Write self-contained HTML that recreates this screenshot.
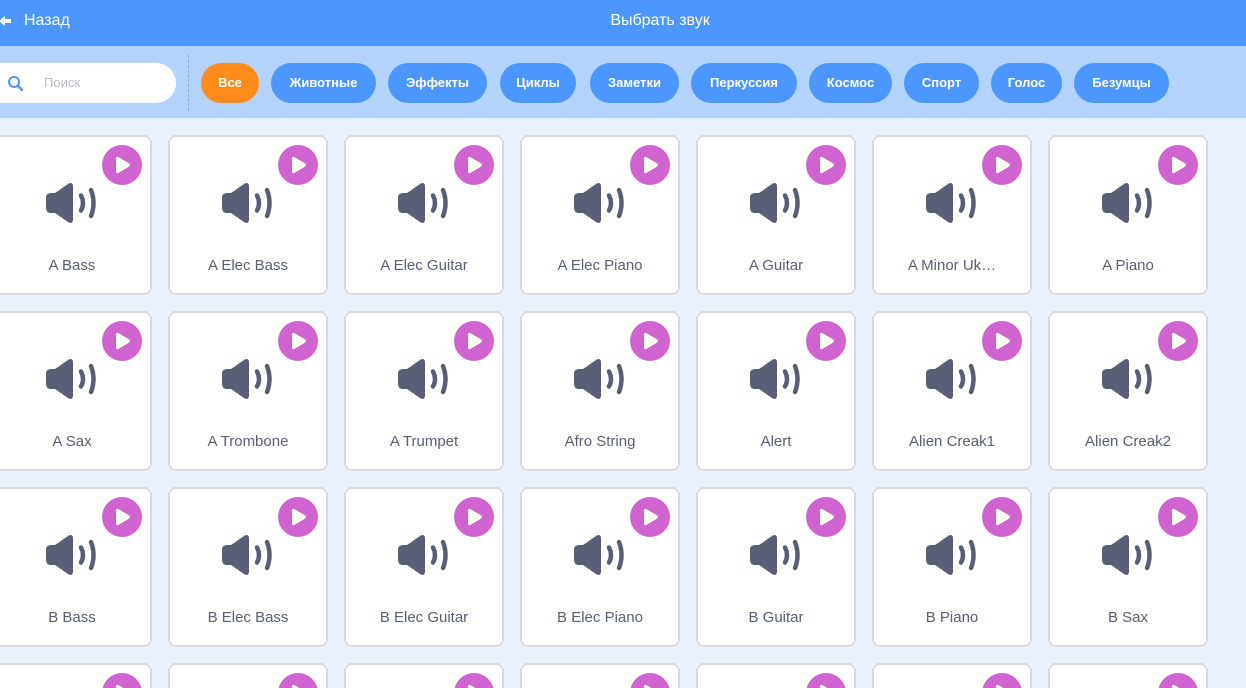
<!DOCTYPE html><html><head><meta charset="utf-8"><style>
html,body{margin:0;width:1246px;height:688px;overflow:hidden}
body{background:#e9f1fc;font-family:"Liberation Sans",sans-serif;position:relative}
.hdr{position:absolute;left:0;top:0;width:1246px;height:46px;background:#4c97ff;color:#fff}
.bar{position:absolute;left:0;top:46px;width:1246px;height:72px;background:#b3d3fd}
.pill{position:absolute;top:63px;height:40px;line-height:40px;border-radius:20px;background:#4c97ff;color:#fff;font-weight:bold;font-size:13px;text-align:center}
#g{position:absolute;left:0;top:0;width:1246px;height:688px;overflow:hidden}
.card{position:absolute;width:156px;height:156px;border:2px solid #d9d9d9;border-radius:8px;background:#fff;box-sizing:content-box}
.card .nm{position:absolute;left:0;right:0;top:120px;text-align:center;font-size:15px;color:#575e75}
.card svg.p{position:absolute;left:108px;top:8px}
.card svg.s{position:absolute;left:52px;top:45px}
</style></head><body>
<div class="hdr">
<svg style="position:absolute;left:-2px;top:13px" width="16" height="16" viewBox="0 0 16 16"><path d="M1 8 L7 3 L7 6 L13 6 L13 10 L7 10 L7 13 Z" fill="#fff"/></svg>
<div style="position:absolute;left:24px;top:12px;font-size:16px">Назад</div>
<div style="position:absolute;left:0;width:1320px;top:12px;font-size:16px;text-align:center">Выбрать звук</div>
</div>
<div class="bar">
<div style="position:absolute;left:-20px;top:17px;width:196px;height:40px;border-radius:20px;background:#fff"></div>
<svg style="position:absolute;left:7px;top:29px" width="18" height="18" viewBox="0 0 18 18"><circle cx="7" cy="7" r="5" fill="none" stroke="#4c97ff" stroke-width="2"/><path d="M11 11 L15 15" stroke="#4c97ff" stroke-width="2.4" stroke-linecap="round"/></svg>
<div style="position:absolute;left:44px;top:29px;font-size:13px;color:#b8bcc6">Поиск</div>
<div style="position:absolute;left:188px;top:9px;height:56px;border-left:1px dashed #8fa8c8"></div>
</div>
<div class="pill" style="left:201px;width:58px;background:#ff8c1a">Все</div>
<div class="pill" style="left:271px;width:105px">Животные</div>
<div class="pill" style="left:388px;width:99px">Эффекты</div>
<div class="pill" style="left:500px;width:76px">Циклы</div>
<div class="pill" style="left:590px;width:89px">Заметки</div>
<div class="pill" style="left:691px;width:106px">Перкуссия</div>
<div class="pill" style="left:809px;width:83px">Космос</div>
<div class="pill" style="left:904px;width:75px">Спорт</div>
<div class="pill" style="left:991px;width:71px">Голос</div>
<div class="pill" style="left:1074px;width:95px">Безумцы</div>
<div id="g"></div>
<script>
var n=[["A Bass","A Elec Bass","A Elec Guitar","A Elec Piano","A Guitar","A Minor Uk…","A Piano"],["A Sax","A Trombone","A Trumpet","Afro String","Alert","Alien Creak1","Alien Creak2"],["B Bass","B Elec Bass","B Elec Guitar","B Elec Piano","B Guitar","B Piano","B Sax"],["","","","","","",""]];
var h="";
for(var r=0;r<4;r++)for(var c=0;c<7;c++){
h+='<div class="card" style="left:'+(-8+176*c)+'px;top:'+(135+176*r)+'px"><svg class="p" width="40" height="40"><circle cx="20" cy="20" r="20" fill="#cf63cf"/><path d="M16 13 Q15 12.3 15 13.5 L15 26.5 Q15 27.7 16 27 L26.5 20.8 Q27.6 20 26.5 19.2Z" fill="#fff" stroke="#fff" stroke-width="2" stroke-linejoin="round"/></svg><svg class="s" width="54" height="42" viewBox="0 0 54 42"><path d="M0 16 Q0 11 5 11 L9 11 L22 2 Q27 -1 27 5 L27 37 Q27 43 22 40 L9 31 L5 31 Q0 31 0 26Z" fill="#575e75"/><path d="M35 13.5 Q39 21 35 28.5" stroke="#575e75" stroke-width="4.5" fill="none" stroke-linecap="round"/><path d="M45 8 Q50 21 45 34" stroke="#575e75" stroke-width="4.5" fill="none" stroke-linecap="round"/></svg><div class="nm">'+n[r][c]+'</div></div>';
}
document.getElementById("g").innerHTML=h;
</script>
</body></html>
